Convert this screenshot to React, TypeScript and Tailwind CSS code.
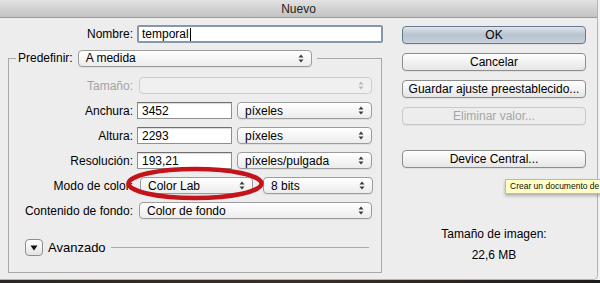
import React from "react";

const font = { fontFamily: '"Liberation Sans", Arial, sans-serif' };

function Arrows({ disabled }: { disabled?: boolean }) {
  return (
    <svg width="6" height="9" viewBox="0 0 6 9" className="shrink-0">
      <path d="M3 0.5 L5.5 3.5 L0.5 3.5 Z" fill={disabled ? "#b8b8b8" : "#3a3a3a"} />
      <path d="M3 8.5 L5.5 5.5 L0.5 5.5 Z" fill={disabled ? "#b8b8b8" : "#3a3a3a"} />
    </svg>
  );
}

function Select({ value, w, disabled, className = "" }: { value?: string; w: string; disabled?: boolean; className?: string }) {
  return (
    <div
      className={`${w} ${className} flex h-[17px] items-center justify-between rounded-[4px] border pl-[7px] pr-[7px] ${
        disabled
          ? "border-[#cdcdcd] bg-[#f0f0f0] text-[#a8a8a8]"
          : "border-[#9c9c9c] bg-gradient-to-b from-[#ffffff] to-[#ececec] text-black shadow-[0_1px_0_rgba(0,0,0,0.06)]"
      }`}
    >
      <span className="leading-none">{value}</span>
      <Arrows disabled={disabled} />
    </div>
  );
}

function TextInput({ value, w }: { value: string; w: string }) {
  return (
    <div className={`${w} flex h-[17px] items-center border border-[#8f8f8f] border-t-[#707070] bg-white pl-[4px] shadow-[inset_0_1px_1px_rgba(0,0,0,0.15)]`}>
      <span className="leading-none">{value}</span>
    </div>
  );
}

function Button({ label, primary, disabled }: { label: string; primary?: boolean; disabled?: boolean }) {
  let cls = "border-[#8d8d8d] bg-gradient-to-b from-[#ffffff] to-[#e6e6e6] text-black";
  if (primary) cls = "border-[#67788c] bg-gradient-to-b from-[#dfe5ec] via-[#b8c3d0] to-[#c9d2dd] text-black";
  if (disabled) cls = "border-[#c9c9c9] bg-[#ededed] text-[#a6a6a6]";
  return (
    <div className={`flex h-[18px] w-full items-center justify-center rounded-[4px] border ${cls} shadow-[0_1px_0_rgba(0,0,0,0.05)]`}>
      <span className="leading-none">{label}</span>
    </div>
  );
}

function Row({ label, gray, children }: { label: string; gray?: boolean; children: React.ReactNode }) {
  return (
    <div className="flex h-[17px] items-center">
      <div className={`w-[128px] pr-[4px] text-right ${gray ? "text-[#a3a3a3]" : "text-black"}`}>{label}</div>
      {children}
    </div>
  );
}

export default function App() {
  return (
    <div className="relative h-[283px] w-[600px] overflow-hidden bg-[#f3f3f3] text-[12px] text-black" style={font}>
      <div className="flex h-[280px] w-[598px] flex-col rounded-br-[5px] border-b border-r border-[#b4b4b4] bg-[#ededed]">
        <div className="flex h-[18px] shrink-0 items-center justify-center border-b border-[#9b9b9b] bg-gradient-to-b from-[#e2e2e2] to-[#c3c3c3]">
          <span className="leading-none text-[#222]">Nuevo</span>
        </div>

        <div className="flex flex-1">
          <div className="w-[392px] pl-[8px] pt-[7px]">
            <div className="flex h-[18px] items-center">
              <div className="w-[129px] pr-[4px] text-right">Nombre:</div>
              <div className="flex h-[18px] w-[246px] items-center rounded-[2px] border-2 border-[#8797ab] bg-white pl-[3px]">
                <span className="leading-none">temporal</span>
                <span className="ml-[1px] h-[13px] w-px bg-black" />
              </div>
            </div>

            <fieldset className="mt-[6px] w-[374px] border border-[#a9a9a9] pb-[16px]">
              <legend className="ml-[7px] flex items-center pl-[2px] pr-[5px]">
                <span className="pr-[5px]">Predefinir:</span>
                <Select value="A medida" w="w-[234px]" />
              </legend>

              <div className="mt-[10px] flex flex-col gap-[8px]">
                <Row label="Tamaño:" gray>
                  <Select w="w-[233px]" className="ml-[2px]" disabled />
                </Row>
                <Row label="Anchura:">
                  <TextInput value="3452" w="w-[95px]" />
                  <Select value="píxeles" w="w-[135px]" className="ml-[5px]" />
                </Row>
                <Row label="Altura:">
                  <TextInput value="2293" w="w-[95px]" />
                  <Select value="píxeles" w="w-[135px]" className="ml-[5px]" />
                </Row>
                <Row label="Resolución:">
                  <TextInput value="193,21" w="w-[95px]" />
                  <Select value="píxeles/pulgada" w="w-[135px]" className="ml-[5px]" />
                </Row>
                <Row label="Modo de color:">
                  <Select value="Color Lab" w="w-[113px]" className="ml-[3px]" />
                  <Select value="8 bits" w="w-[110px]" className="ml-[10px]" />
                </Row>
                <Row label="Contenido de fondo:">
                  <Select value="Color de fondo" w="w-[233px]" className="ml-[2px]" />
                </Row>
              </div>

              <div className="ml-[16px] mt-[20px] flex h-[17px] items-center">
                <div className="flex h-[17px] w-[18px] items-center justify-center rounded-[4px] border border-[#8d8d8d] bg-gradient-to-b from-white to-[#e4e4e4]">
                  <svg width="8" height="6" viewBox="0 0 8 6">
                    <path d="M0.5 0.5 L7.5 0.5 L4 5.5 Z" fill="#111" />
                  </svg>
                </div>
                <span className="ml-[5px] text-[13px]">Avanzado</span>
                <div className="ml-[5px] h-px w-[258px] bg-[#a9a9a9]" />
              </div>
            </fieldset>
          </div>

          <div className="ml-[10px] flex w-[184px] flex-col pt-[8px]">
            <div className="flex flex-col gap-[9px]">
              <Button label="OK" primary />
              <Button label="Cancelar" />
              <Button label="Guardar ajuste preestablecido..." />
              <Button label="Eliminar valor..." disabled />
            </div>
            <div className="mt-[25px]">
              <Button label="Device Central..." />
            </div>
            <div className="mt-[59px] text-center leading-[15px]">Tamaño de imagen:</div>
            <div className="mt-[6px] text-center leading-[15px]">22,6 MB</div>
          </div>
        </div>
      </div>

      <div className="h-[3px] w-full bg-gradient-to-r from-[#2a2622] via-[#3b2e26] to-[#1e1c1a]" />

      <div className="absolute left-[505px] top-[179px] flex h-[15px] w-[110px] items-center whitespace-nowrap border border-[#bdbd98] bg-[#ffffc6] pl-[4px] text-[8.5px] text-[#111] shadow-[0_2px_3px_rgba(0,0,0,0.25)]">
        Crear un documento de I
      </div>

      <svg className="absolute left-[125px] top-[166px]" width="140" height="35" viewBox="0 0 140 35">
        <ellipse cx="70" cy="17.5" rx="66.5" ry="14.5" fill="none" stroke="#c3141b" strokeWidth="4.5" />
      </svg>
    </div>
  );
}
